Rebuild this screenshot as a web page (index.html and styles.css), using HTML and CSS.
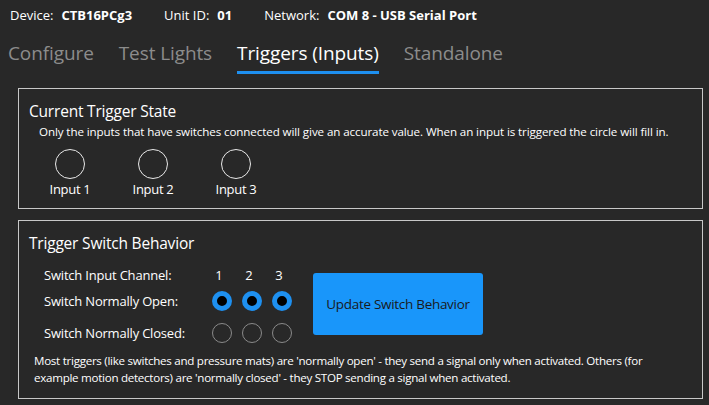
FILE: index.html
```html
<!DOCTYPE html>
<html>
<head>
<meta charset="utf-8">
<link rel="stylesheet" href="styles.css">
</head>
<body>
<div class="topbar">
  <span class="lbl">Device:</span><span class="val v1">CTB16PCg3</span>
  <span class="lbl">Unit ID:</span><span class="val v2">01</span>
  <span class="lbl">Network:</span><span class="val">COM 8 - USB Serial Port</span>
</div>
<div class="tabs">
  <div class="tab">Configure</div>
  <div class="tab">Test Lights</div>
  <div class="tab active">Triggers (Inputs)</div>
  <div class="tab">Standalone</div>
</div>
<div class="panel p1">
  <div class="title">Current Trigger State</div>
  <div class="desc">Only the inputs that have switches connected will give an accurate value. When an input is triggered the circle will fill in.</div>
  <div class="inputs">
    <div class="inp"><div class="ring"></div><div class="inlbl">Input 1</div></div>
    <div class="inp"><div class="ring"></div><div class="inlbl">Input 2</div></div>
    <div class="inp"><div class="ring"></div><div class="inlbl">Input 3</div></div>
  </div>
</div>
<div class="panel p2">
  <div class="title">Trigger Switch Behavior</div>
  <div class="behav">
    <div class="grid">
      <div class="rl">Switch Input Channel:</div>
      <div class="num">1</div><div class="num">2</div><div class="num">3</div>
      <div class="rl">Switch Normally Open:</div>
      <div class="cell"><span class="radio on"></span></div>
      <div class="cell"><span class="radio on"></span></div>
      <div class="cell"><span class="radio on"></span></div>
      <div class="rl">Switch Normally Closed:</div>
      <div class="cell"><span class="radio"></span></div>
      <div class="cell"><span class="radio"></span></div>
      <div class="cell"><span class="radio"></span></div>
    </div>
    <button class="btn">Update Switch Behavior</button>
  </div>
  <div class="foot">Most triggers (like switches and pressure mats) are 'normally open' - they send a signal only when activated. Others (for example motion detectors) are 'normally closed' - they STOP sending a signal when activated.</div>
</div>
</body>
</html>
```

FILE: styles.css
```css
html, body {
  margin: 0;
  padding: 0;
  background: #282828;
  color: #ffffff;
  font-family: "Open Sans", "Noto Sans", sans-serif;
}
body {
  width: 709px;
  height: 405px;
  overflow: hidden;
}
.topbar {
  display: flex;
  align-items: center;
  height: 30px;
  padding-left: 10px;
  font-size: 13px;
  letter-spacing: 0;
}
.lbl { margin-right: 8px; }
.val { font-weight: 700; margin-right: 32px; }
.tabs {
  display: flex;
  gap: 25px;
  padding-left: 8px;
  height: 44px;
  font-size: 19px;
  letter-spacing: -0.1px;
}
.tab {
  color: #8c8c8c;
  padding-top: 10px;
  line-height: 26px;
  height: 26px;
}
.tab.active {
  color: #ffffff;
  border-bottom: 3px solid #1e90f0;
  height: 31px;
}
.panel {
  margin-left: 18px;
  width: 683px;
  border: 1px solid #c8c8c8;
  box-sizing: content-box;
}
.p1 {
  margin-top: 14px;
  height: 119px;
}
.p2 {
  margin-top: 11px;
  height: 177px;
}
.title {
  font-size: 15.5px;
  line-height: 22px;
  padding-left: 10px;
  letter-spacing: -0.2px;
}
.p1 .title { margin-top: 11px; }
.p2 .title { margin-top: 11px; }
.desc {
  font-size: 11.6px;
  line-height: 16px;
  padding-left: 20px;
  letter-spacing: -0.1px;
  margin-top: 2px;
}
.inputs {
  display: flex;
  gap: 41px;
  padding-left: 30px;
  margin-top: 9px;
}
.inp {
  width: 42px;
  display: flex;
  flex-direction: column;
  align-items: center;
}
.ring {
  width: 28px;
  height: 28px;
  border: 1px solid #e8e8e8;
  border-radius: 50%;
}
.inlbl {
  font-size: 13px;
  line-height: 18px;
  margin-top: 1px;
  letter-spacing: -0.3px;
  white-space: nowrap;
}
.behav {
  display: flex;
  padding-left: 25px;
  margin-top: 8px;
}
.grid {
  display: grid;
  grid-template-columns: 158px 20px 20px 20px;
  grid-template-rows: 26px 26px 38px;
  column-gap: 10px;
}
.rl {
  font-size: 13px;
  letter-spacing: -0.2px;
  display: flex;
  align-items: center;
  white-space: nowrap;
}
.num {
  font-size: 13px;
  display: flex;
  align-items: center;
  justify-content: center;
  margin-left: -6px;
}
.cell {
  display: flex;
  align-items: center;
  justify-content: center;
}
.radio {
  display: block;
  width: 18px;
  height: 18px;
  border-radius: 50%;
  border: 1px solid #8a8a8a;
}
.radio.on {
  width: 10px;
  height: 10px;
  border: 5px solid #1e90f0;
  background: #000000;
}
.btn {
  margin-left: 21px;
  margin-top: 11px;
  width: 170px;
  height: 62px;
  background: #1996fa;
  border: none;
  border-radius: 3px;
  color: #1a1a1a;
  font-family: "Open Sans", "Noto Sans", sans-serif;
  font-size: 13.5px;
  letter-spacing: -0.3px;
  padding: 0;
}
.foot {
  font-size: 11.6px;
  line-height: 17px;
  padding-left: 15px;
  padding-right: 20px;
  letter-spacing: -0.28px;
  margin-top: 0;
}
```
